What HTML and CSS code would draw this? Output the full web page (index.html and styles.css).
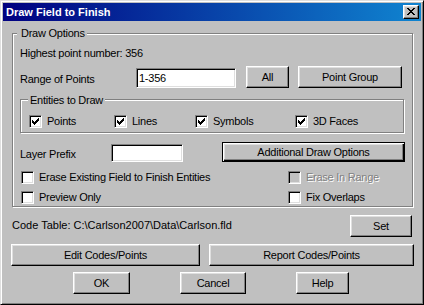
FILE: index.html
```html
<!DOCTYPE html>
<html lang="en">
<head>
    <meta charset="UTF-8">
    <title>Draw Field to Finish</title>
    <link rel="stylesheet" href="styles.css">
</head>
<body>
    <div class="window">
        <div class="titlebar">
            <span class="title">Draw Field to Finish</span>
            <button class="close">
                <svg width="8" height="7" viewBox="0 0 8 7"><path d="M0 0h2v1h-2zM6 0h2v1h-2zM1 1h2v1h-2zM5 1h2v1h-2zM2 2h4v1h-4zM3 3h2v1h-2zM2 4h4v1h-4zM1 5h2v1h-2zM5 5h2v1h-2zM0 6h2v1h-2zM6 6h2v1h-2z"/></svg>
            </button>
        </div>
        <div class="content">
            <div class="group options">
                <span class="legend">Draw Options</span>
                <div class="line highest">Highest point number: 356</div>
                <div class="row range">
                    <span class="label range-label">Range of Points</span>
                    <input class="field range-field" type="text" value="1-356">
                    <button class="btn all">All</button>
                    <button class="btn group-btn">Point Group</button>
                </div>
                <div class="group entities">
                    <span class="legend">Entities to Draw</span>
                    <div class="checks">
                        <label class="item w-points"><span class="check on"></span>Points</label>
                        <label class="item w-lines"><span class="check on"></span>Lines</label>
                        <label class="item w-symbols"><span class="check on"></span>Symbols</label>
                        <label class="item"><span class="check on"></span>3D Faces</label>
                    </div>
                </div>
                <div class="row layer">
                    <span class="label layer-label">Layer Prefix</span>
                    <input class="field layer-field" type="text" value="">
                    <button class="btn default extra">Additional Draw Options</button>
                </div>
                <div class="row opts first">
                    <label class="item w-erase"><span class="check"></span>Erase Existing Field to Finish Entities</label>
                    <label class="item disabled"><span class="check"></span>Erase In Range</label>
                </div>
                <div class="row opts second">
                    <label class="item w-erase"><span class="check"></span>Preview Only</label>
                    <label class="item"><span class="check"></span>Fix Overlaps</label>
                </div>
            </div>
            <div class="row code">
                <span class="label code-label">Code Table: C:\Carlson2007\Data\Carlson.fld</span>
                <button class="btn set">Set</button>
            </div>
            <div class="row codes">
                <button class="btn edit">Edit Codes/Points</button>
                <button class="btn report">Report Codes/Points</button>
            </div>
            <div class="row actions">
                <button class="btn ok">OK</button>
                <button class="btn cancel">Cancel</button>
                <button class="btn help">Help</button>
            </div>
        </div>
    </div>
    <script>
document.querySelectorAll('.check.on').forEach(box => {
    box.innerHTML = '<svg width="13" height="13" viewBox="0 0 13 13"><path d="M3 5V8H4V9H5V10H6V9H7V8H8V7H9V6H10V3H9V4H8V5H7V6H6V7H5V6H4V5Z"/></svg>';
});
    </script>
</body>
</html>
```

FILE: styles.css
```css
* {
    box-sizing: border-box;
}

body {
    margin: 0;
    background-color: #c0c0c0;
    font-family: "Liberation Sans", Arial, sans-serif;
    font-size: 11px;
    line-height: 13px;
    letter-spacing: -0.25px;
    color: #000;
}

.window {
    width: 424px;
    height: 305px;
    padding: 2px;
    background-color: #c0c0c0;
    border: 1px solid;
    border-color: #dfdfdf #000 #000 #dfdfdf;
    box-shadow: inset 1px 1px #fff, inset -1px -1px #808080;
}

.titlebar {
    height: 18px;
    display: flex;
    align-items: center;
    justify-content: space-between;
    padding-left: 3px;
    padding-right: 2px;
    background: linear-gradient(to right, #000080, #1084d0);
}

.title {
    color: #fff;
    font-weight: bold;
    letter-spacing: 0;
}

.close {
    width: 16px;
    height: 14px;
    padding: 0 0 0 3px;
    display: flex;
    align-items: flex-start;
    padding-top: 2px;
    background-color: #c0c0c0;
    border: 1px solid;
    border-color: #fff #000 #000 #fff;
    box-shadow: inset -1px -1px #808080, inset 1px 1px #dfdfdf;
}

.content {
    padding: 12px 0 0 9px;
}

.group {
    position: relative;
    border: 1px solid #808080;
    box-shadow: inset 1px 1px #fff, 1px 1px #fff;
}

.legend {
    position: absolute;
    background-color: #c0c0c0;
}

.options {
    width: 401px;
    height: 174px;
    padding: 13px 0 0 7px;
}

.options > .legend {
    top: -7px;
    left: 4px;
    padding: 0 2px 0 4px;
}

.line {
    height: 13px;
}

.row {
    display: flex;
    align-items: flex-start;
}

.label {
    white-space: nowrap;
}

.field {
    font: inherit;
    letter-spacing: inherit;
    background-color: #fff;
    border: 1px solid;
    border-color: #808080 #fff #fff #808080;
    box-shadow: inset 1px 1px #000, inset -1px -1px #dfdfdf;
    padding: 0 2px;
    outline: none;
}

.btn {
    font: inherit;
    letter-spacing: inherit;
    color: #000;
    background-color: #c0c0c0;
    border: 1px solid;
    border-color: #fff #000 #000 #fff;
    box-shadow: inset -1px -1px #808080, inset 1px 1px #dfdfdf;
    padding: 0;
    height: 22px;
}

.btn.default {
    border-color: #000;
    box-shadow: inset 1px 1px #fff, inset -1px -1px #000, inset -2px -2px #808080, inset 2px 2px #dfdfdf;
}

.range {
    height: 22px;
    margin-top: 6px;
}

.range-label {
    width: 116px;
    margin-top: 7px;
}

.range-field {
    width: 100px;
    height: 20px;
    margin-top: 2px;
}

.all {
    width: 43px;
    margin-left: 10px;
}

.group-btn {
    width: 104px;
    margin-left: 9px;
}

.entities {
    width: 384px;
    height: 34px;
    margin-top: 11px;
    padding: 15px 0 0 8px;
}

.entities > .legend {
    top: -6px;
    left: 7px;
    padding: 0 2px;
}

.checks {
    display: flex;
}

.item {
    display: flex;
    align-items: center;
    height: 13px;
    white-space: nowrap;
}

.check {
    width: 13px;
    height: 13px;
    margin-right: 5px;
    flex: none;
    background-color: #fff;
    border: 1px solid;
    border-color: #808080 #fff #fff #808080;
    box-shadow: inset 1px 1px #000, inset -1px -1px #dfdfdf;
    position: relative;
}

.check svg {
    position: absolute;
    top: -1px;
    left: -1px;
}

.w-points {
    width: 85px;
}

.w-lines {
    width: 81px;
}

.w-symbols {
    width: 100px;
}

.layer {
    height: 20px;
    margin-top: 9px;
}

.layer-label {
    width: 91px;
    margin-top: 6px;
}

.layer-field {
    width: 72px;
    height: 18px;
    margin-top: 2px;
}

.extra {
    width: 183px;
    height: 20px;
    margin-left: 39px;
}

.opts {
    margin-left: 1px;
}

.opts.first {
    margin-top: 9px;
}

.opts.second {
    margin-top: 7px;
}

.w-erase {
    width: 267px;
}

.disabled {
    color: #808080;
    text-shadow: 1px 1px #fff;
}

.disabled .check {
    background-color: #c0c0c0;
}

.code {
    width: 400px;
    height: 22px;
    margin-top: 8px;
    justify-content: space-between;
}

.code-label {
    margin-top: 4px;
    letter-spacing: 0;
}

.set {
    width: 62px;
}

.codes {
    margin-top: 7px;
    margin-left: -1px;
}

.edit {
    width: 189px;
}

.report {
    width: 205px;
    margin-left: 9px;
}

.actions {
    margin-top: 6px;
    margin-left: 61px;
}

.ok {
    width: 57px;
}

.cancel {
    width: 66px;
    margin-left: 50px;
}

.help {
    width: 53px;
    margin-left: 50px;
}
```
